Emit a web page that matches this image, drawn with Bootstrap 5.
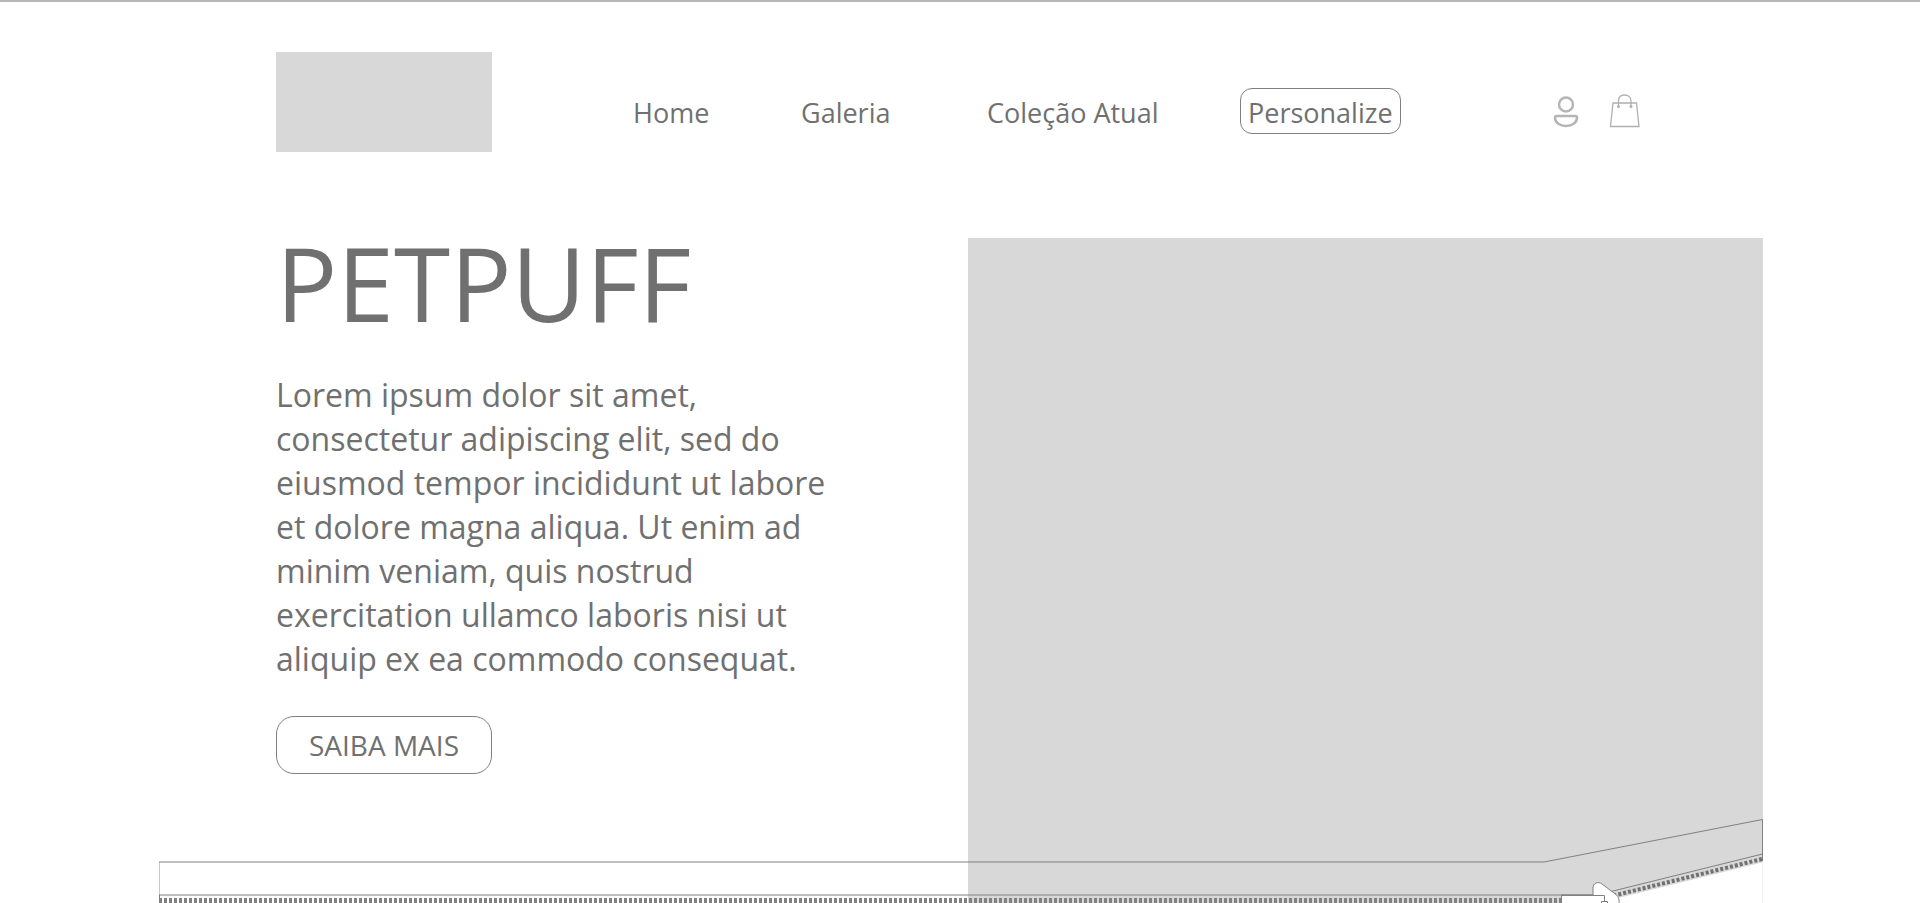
<!DOCTYPE html>
<html lang="pt-BR">
<head>
<meta charset="utf-8">
<meta name="viewport" content="width=device-width, initial-scale=1">
<title>PETPUFF</title>
<link href="https://cdn.jsdelivr.net/npm/bootstrap@5.3.0/dist/css/bootstrap.min.css" rel="stylesheet">
<style>
  body { font-family: "Open Sans", "Noto Sans", sans-serif; color: #707070; border-top: 2px solid #b9b4b4; }
  a, a:hover { color: inherit; }
  .site-header {
    grid-template-columns: 276fr 357fr 168fr 186fr 253fr 313fr 56fr 311fr;
    padding-top: 50px;
    height: 236px;
  }
  .site-header > *, .main-menu > * { min-width: 0; }
  .main-menu { display: contents; }
  .menu-item { padding-top: 36px; white-space: nowrap; }
  .menu-item a { display: inline-block; font-size: 27px; line-height: 40px; padding-top: 4px; border: 1px solid transparent; border-left-width: 0; }
  .menu-item .pill { border: 1px solid #808080; border-radius: 12px; padding-left: 7px; padding-right: 7px; }
  .logo-box { grid-column: 2; width: 216px; height: 100px; }
  .placeholder-fill { background: #d8d8d8; }
  .tool-icon { padding-top: 40px; }
  .hero { grid-template-columns: 276fr 692fr 795fr 157fr; }
  .hero-copy { grid-column: 2; }
  .hero-title { font-size: 102px; line-height: 120px; margin: -15px 0 0; }
  .hero-text { font-size: 32px; line-height: 44px; max-width: 570px; margin: 30px 0 0; }
  .more-btn { font-size: 28px; line-height: 56px; width: 216px; border: 1px solid #808080; border-radius: 18px; color: inherit; margin-top: 35px; }
</style>
</head>
<body class="bg-white d-flex flex-column vh-100 overflow-hidden">
  <header class="site-header d-grid flex-shrink-0">
    <a href="#" class="logo-box placeholder-fill" aria-label="PETPUFF"></a>
    <nav class="main-menu" aria-label="Principal">
      <div class="menu-item"><a class="text-decoration-none" href="#">Home</a></div>
      <div class="menu-item"><a class="text-decoration-none" href="#">Galeria</a></div>
      <div class="menu-item"><a class="text-decoration-none" href="#">Coleção Atual</a></div>
      <div class="menu-item"><a class="pill text-decoration-none" href="#">Personalize</a></div>
    </nav>
    <a href="#" class="tool-icon" aria-label="Conta">
      <svg width="26" height="36" viewBox="0 0 26 36" fill="none" stroke="#b5b5b5" stroke-width="2.500"><circle cx="13" cy="12.500" r="7"/><path d="M3.500 24H22.500Q24 24 24 25.500C24 31 19 34 13 34S2 31 2 25.500Q2 24 3.500 24Z"/></svg>
    </a>
    <a href="#" class="tool-icon" aria-label="Sacola">
      <svg width="32" height="36" viewBox="0 0 32 36" fill="none" stroke="#b0b0b0" stroke-width="1.300"><path d="M4 11H27.500L30 34.500H1.500ZM9.500 14V9C9.500 5 12 3 15.500 3S22 5 22 9V14"/><g fill="#b0b0b0" stroke="none"><circle cx="9.500" cy="14.500" r="1.500"/><circle cx="22" cy="14.500" r="1.500"/></g></svg>
    </a>
  </header>

  <main class="hero d-grid flex-grow-1 position-relative">
    <section class="hero-copy">
      <h1 class="hero-title fw-normal">PETPUFF</h1>
      <p class="hero-text">Lorem ipsum dolor sit amet, consectetur adipiscing elit, sed do eiusmod tempor incididunt ut labore et dolore magna aliqua. Ut enim ad minim veniam, quis nostrud exercitation ullamco laboris nisi ut aliquip ex ea commodo consequat.</p>
      <button type="button" class="more-btn btn p-0">SAIBA MAIS</button>
    </section>
    <div class="placeholder-fill"></div>

    <!-- zip-lined cushion edge crossing the bottom of the hero -->
    <svg class="position-absolute bottom-0 start-0 w-100 pe-none" viewBox="0 813 1920 90" fill="none" stroke="#808080" aria-hidden="true">
      <path d="M1561 895H1604L1613 892L1618 898L1764 862V903H1561Z" fill="#fff" stroke="none"/>
      <path d="M1762.500 862V903" stroke="#f3f3f3"/>
      <path d="M159.500 862V895" stroke="#c8c8c8"/>
      <path d="M159 862H1544L1762.500 819.500V861M1762.500 854L1611 891.500M159 895H1594"/>
      <path d="M159.500 895V903"/>
      <path d="M159 900.500H1561" stroke="#808080" stroke-width="5" stroke-dasharray="3 2"/>
      <path d="M1762 859L1614 895.500" stroke="#707070" stroke-width="4" stroke-dasharray="3 2"/>
      <path d="M1561.500 903V895H1593V888C1593 883 1598 881 1602 884L1616 894.500Q1620 898 1619 904" fill="#fff"/>
      <path d="M1561.500 895.500H1604.500V901.500M1601.500 904V901.500H1607.500V904"/>
    </svg>
  </main>
<script src="https://cdn.jsdelivr.net/npm/bootstrap@5.3.0/dist/js/bootstrap.bundle.min.js"></script>
</body>
</html>
